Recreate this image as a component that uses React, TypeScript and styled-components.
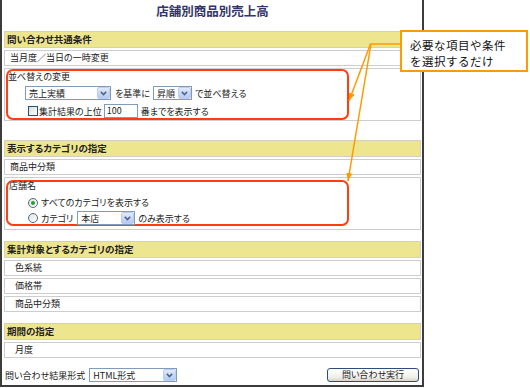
import styled, { createGlobalStyle } from "styled-components";

const GlobalStyle = createGlobalStyle`
  html, body {
    margin: 0;
    padding: 0;
    background: #fff;
  }
  body {
    font-family: "Noto Sans CJK JP", "Liberation Sans", sans-serif;
    color: #222;
  }
`;

const Page = styled.div`
  position: relative;
  width: 530px;
  height: 388px;
  overflow: hidden;
`;

const Frame = styled.div`
  box-sizing: border-box;
  width: 424px;
  height: 387px;
  border: 2px solid #3c3c3c;
  border-top: none;
  padding: 0 1px 2px 2px;
  display: flex;
  flex-direction: column;
  font-size: 9px;
  font-feature-settings: "palt";
`;

const Title = styled.h1`
  box-sizing: border-box;
  height: 31px;
  margin: 0;
  padding-top: 3px;
  text-align: center;
  font-size: 12.5px;
  line-height: 16px;
  font-weight: 700;
  color: #34346c;
`;

const SectionHeader = styled.div<{ $gap?: number }>`
  box-sizing: border-box;
  height: 17px;
  margin-top: ${(p) => p.$gap ?? 0}px;
  padding-left: 2px;
  background: #eee68e;
  border: 1px solid #d2d0c0;
  font-size: 9.5px;
  font-weight: 700;
  line-height: 15px;
  color: #222;
`;

const Row = styled.div<{ $indent?: number }>`
  box-sizing: border-box;
  height: 16px;
  margin-top: 2px;
  padding-left: ${(p) => p.$indent ?? 5}px;
  border: 1px solid #cdcdcd;
  line-height: 14px;
`;

const OptionBox = styled.div<{ $padTop: number }>`
  box-sizing: border-box;
  height: 53px;
  margin-top: 2px;
  padding: ${(p) => p.$padTop}px 0 0 1px;
  border: 1px solid #cdcdcd;
`;

const Highlight = styled.div<{ $height: number }>`
  box-sizing: border-box;
  width: 343px;
  height: ${(p) => p.$height}px;
  border: 2px solid #ff3d12;
  border-radius: 7px;
  display: flex;
  flex-direction: column;
`;

const BoxLabel = styled.div<{ $top: number; $indent: number }>`
  margin-top: ${(p) => p.$top}px;
  padding-left: ${(p) => p.$indent}px;
  line-height: 12px;
`;

const ControlRow = styled.div<{ $top: number }>`
  display: flex;
  align-items: center;
  gap: 3px;
  height: 14px;
  margin-top: ${(p) => p.$top}px;
  padding-left: 20px;
  white-space: nowrap;
`;

const SelectBox = styled.div<{ $width: number; $ml?: number }>`
  box-sizing: border-box;
  width: ${(p) => p.$width}px;
  height: 14px;
  margin-left: ${(p) => p.$ml ?? 0}px;
  padding-left: 3px;
  border: 1px solid #7f9db9;
  background: #fff;
  display: flex;
  align-items: center;
  justify-content: space-between;
  flex-shrink: 0;
`;

const SelectArrow = styled.span`
  box-sizing: border-box;
  width: 13px;
  height: 12px;
  border: 1px solid #bccdf2;
  border-radius: 2px;
  background: linear-gradient(#e1e9fc, #b6c9f3);
  display: flex;
  align-items: center;
  justify-content: center;
`;

const CheckBox = styled.span`
  box-sizing: border-box;
  width: 10px;
  height: 10px;
  border: 1px solid #1c5180;
  background: linear-gradient(135deg, #dcdcd5, #fff);
  flex-shrink: 0;
`;

const Radio = styled.span<{ $checked?: boolean }>`
  box-sizing: border-box;
  width: 10px;
  height: 10px;
  border: 1px solid #4c6a8c;
  border-radius: 50%;
  background: linear-gradient(135deg, #e0e0da, #fff);
  display: flex;
  align-items: center;
  justify-content: center;
  flex-shrink: 0;

  &::after {
    content: "";
    width: 4px;
    height: 4px;
    border-radius: 50%;
    background: #27a027;
    display: ${(p) => (p.$checked ? "block" : "none")};
  }
`;

const NumberField = styled.span`
  box-sizing: border-box;
  width: 34px;
  height: 14px;
  margin-left: -1px;
  padding-left: 2px;
  border: 1px solid #7f9db9;
  line-height: 12px;
  flex-shrink: 0;
`;

const Footer = styled.div`
  display: flex;
  align-items: center;
  gap: 4px;
  height: 16px;
  margin-top: 9px;
  padding-left: 1px;
`;

const SubmitButton = styled.button`
  box-sizing: border-box;
  width: 92px;
  height: 14px;
  margin-left: auto;
  margin-right: 2px;
  padding: 0;
  border: 1px solid #2b4f78;
  border-radius: 3px;
  background: linear-gradient(#ffffff, #efeee9 70%, #d8d3c8);
  font-family: "Noto Sans CJK JP", sans-serif;
  font-size: 9px;
  font-feature-settings: "palt";
  line-height: 12px;
  color: #222;
`;

const Callout = styled.div`
  position: absolute;
  left: 400px;
  top: 30px;
  box-sizing: border-box;
  width: 128px;
  height: 42px;
  padding: 5px 0 0 8px;
  border: 2px solid #ff9a00;
  background: #fff;
  font-size: 11.5px;
  letter-spacing: 0.5px;
  line-height: 16px;
  color: #111;
`;

const Leaders = styled.svg`
  position: absolute;
  left: 0;
  top: 0;
  pointer-events: none;
`;

function Select({ value, width, ml }: { value: string; width: number; ml?: number }) {
  return (
    <SelectBox $width={width} $ml={ml}>
      <span>{value}</span>
      <SelectArrow>
        <svg width="7" height="5" viewBox="0 0 7 5">
          <polyline points="0.8,0.8 3.5,3.6 6.2,0.8" fill="none" stroke="#4d6185" strokeWidth="1.6" />
        </svg>
      </SelectArrow>
    </SelectBox>
  );
}

export default function App() {
  return (
    <Page>
      <GlobalStyle />
      <Frame>
        <Title>店舗別商品別売上高</Title>

        <SectionHeader>問い合わせ共通条件</SectionHeader>
        <Row>当月度／当日の一時変更</Row>
        <OptionBox $padTop={0}>
          <Highlight $height={51}>
            <BoxLabel $top={0} $indent={0}>並べ替えの変更</BoxLabel>
            <ControlRow $top={3}>
              <Select value="売上実績" width={86} ml={-3} />
              <span style={{ marginLeft: 1 }}>を基準に</span>
              <Select value="昇順" width={39} />
              <span>で並べ替える</span>
            </ControlRow>
            <ControlRow $top={4}>
              <CheckBox />
              <span style={{ marginLeft: -2 }}>集計結果の上位</span>
              <NumberField>100</NumberField>
              <span>番までを表示する</span>
            </ControlRow>
          </Highlight>
        </OptionBox>

        <SectionHeader $gap={19}>表示するカテゴリの指定</SectionHeader>
        <Row>商品中分類</Row>
        <OptionBox $padTop={2}>
          <Highlight $height={46}>
            <BoxLabel $top={-2} $indent={1}>店舗名</BoxLabel>
            <ControlRow $top={4}>
              <Radio $checked />
              <span>すべてのカテゴリを表示する</span>
            </ControlRow>
            <ControlRow $top={2}>
              <Radio />
              <span>カテゴリ</span>
              <Select value="本店" width={58} ml={1} />
              <span>のみ表示する</span>
            </ControlRow>
          </Highlight>
        </OptionBox>

        <SectionHeader $gap={11}>集計対象とするカテゴリの指定</SectionHeader>
        <Row $indent={10}>色系統</Row>
        <Row $indent={10}>価格帯</Row>
        <Row $indent={10}>商品中分類</Row>

        <SectionHeader $gap={11}>期間の指定</SectionHeader>
        <Row $indent={10}>月度</Row>

        <Footer>
          <span>問い合わせ結果形式</span>
          <Select value="HTML形式" width={88} />
          <SubmitButton>問い合わせ実行</SubmitButton>
        </Footer>
      </Frame>

      <Leaders width="530" height="388" viewBox="0 0 530 388">
        <defs>
          <marker id="tip" viewBox="0 0 8 6" refX="8" refY="3" markerWidth="8" markerHeight="6" markerUnits="userSpaceOnUse" orient="auto">
            <path d="M0 0 L8 3 L0 6 Z" fill="#ff9a00" />
          </marker>
        </defs>
        <g stroke="#ff9a00" strokeWidth="1.5" fill="none">
          <line x1="401" y1="44" x2="370" y2="44" />
          <line x1="370.5" y1="44" x2="349" y2="101" markerEnd="url(#tip)" />
          <line x1="371" y1="44" x2="348" y2="181" markerEnd="url(#tip)" />
        </g>
      </Leaders>

      <Callout>
        必要な項目や条件
        <br />
        を選択するだけ
      </Callout>
    </Page>
  );
}
